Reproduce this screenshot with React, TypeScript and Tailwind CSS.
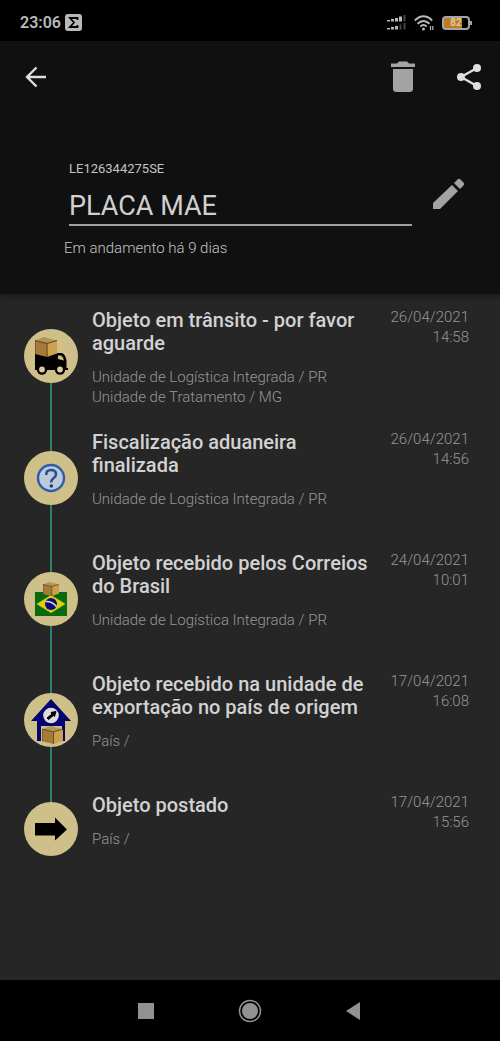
import React from "react";

interface TrackingEvent {
    title: string;
    details: string[];
    date: string;
    time: string;
    icon: React.ReactNode;
}

const Box: React.FC<{ x: number; y: number; w: number; h: number }> = ({ x, y, w, h }) => (
    <svg x={x} y={y} width={w} height={h} viewBox="0 0 20 20" preserveAspectRatio="none">
        <path d="M0 3.500 11 6.500V20L0 17Z" fill="#a67a38" />
        <path d="M11 6.500 20 3.500V16.500L11 20Z" fill="#cda04e" />
        <path d="M0 3.500 8 0 20 3.500 11 6.500Z" fill="#b39457" />
        <path d="M0 3.500 11 6.500 20 3.500M11 6.500V20M0 3.500V17" fill="none" stroke="#4a3413" strokeWidth="0.8" />
    </svg>
);

const TruckIcon = () => (
    <svg viewBox="0 0 54 54" className="size-full" aria-hidden="true">
        <path d="M11 25H31L33 24H37Q40 24 41.500 28L42.500 31V39H44V41H11Z" fill="#000" />
        <path d="M34 26.500H37Q39 27.500 40 31.500L34 30Z" fill="#cfc08a" />
        <circle cx="18" cy="40.500" r="5.200" fill="#000" />
        <circle cx="36" cy="40.500" r="5.200" fill="#000" />
        <circle cx="18" cy="40.500" r="2.900" fill="#d8cca0" />
        <circle cx="36" cy="40.500" r="2.900" fill="#d8cca0" />
        <Box x={11} y={8} w={22} h={20} />
    </svg>
);

const QuestionIcon = () => (
    <svg viewBox="0 0 54 54" className="size-full" aria-hidden="true">
        <circle cx="27" cy="27" r="13" fill="#bccbdc" stroke="#2f5cab" strokeWidth="2.400" />
        <path
            d="M22.200 24Q22 19 27 19T32 23.200Q32 25.500 29.500 27.200T27.300 31.500"
            fill="none"
            stroke="#2f4f94"
            strokeWidth="2.600"
        />
        <circle cx="27.300" cy="35" r="1.800" fill="#26365e" />
    </svg>
);

const BrazilIcon = () => (
    <svg viewBox="0 0 54 54" className="size-full" aria-hidden="true">
        <path d="M11 20H43V44H11Z" fill="#0b6b0c" />
        <path d="M12.500 32 27 23 41.500 32 27 41Z" fill="#d8cf16" />
        <circle cx="27" cy="32" r="6" fill="#0a0a78" />
        <path d="M21.500 29.500Q28 29 32.500 34.500" fill="none" stroke="#dadada" strokeWidth="1.500" />
        <Box x={19} y={10} w={16} h={14} />
    </svg>
);

const OriginIcon = () => (
    <svg viewBox="0 0 54 54" className="size-full" aria-hidden="true">
        <path d="M27 6 47 28H41V48H38V33H17V48H13V28H7Z" fill="#04046e" />
        <circle cx="27" cy="22.500" r="7.800" fill="#dcdcdc" />
        <path d="M23 25 28 21 27 19.500 32 18.500 30.500 23.500 29.300 22.500 24.500 26.500Z" fill="#000" stroke="#000" />
        <Box x={18} y={33} w={21} h={18} />
    </svg>
);

const ArrowIcon = () => (
    <svg viewBox="0 0 54 54" className="size-full" aria-hidden="true">
        <path d="M11 21H31V15.500L43 27.500 31 38.500V33.500H11Z" fill="#000" />
    </svg>
);

const events: TrackingEvent[] = [
    {
        title: "Objeto em trânsito - por favor aguarde",
        details: ["Unidade de Logística Integrada / PR", "Unidade de Tratamento / MG"],
        date: "26/04/2021",
        time: "14:58",
        icon: <TruckIcon />,
    },
    {
        title: "Fiscalização aduaneira finalizada",
        details: ["Unidade de Logística Integrada / PR"],
        date: "26/04/2021",
        time: "14:56",
        icon: <QuestionIcon />,
    },
    {
        title: "Objeto recebido pelos Correios do Brasil",
        details: ["Unidade de Logística Integrada / PR"],
        date: "24/04/2021",
        time: "10:01",
        icon: <BrazilIcon />,
    },
    {
        title: "Objeto recebido na unidade de exportação no país de origem",
        details: ["País /"],
        date: "17/04/2021",
        time: "16:08",
        icon: <OriginIcon />,
    },
    {
        title: "Objeto postado",
        details: ["País /"],
        date: "17/04/2021",
        time: "15:56",
        icon: <ArrowIcon />,
    },
];

const StatusBar = () => (
    <div className="flex h-[41px] items-center justify-between bg-black pt-1 pr-7 pl-5 text-[#b9b9b9]">
        <div className="flex items-center gap-1">
            <span className="text-base font-semibold">23:06</span>
            <svg width="17" height="17" viewBox="0 0 17 17" aria-hidden="true">
                <rect width="17" height="17" rx="3" fill="#b9b9b9" />
                <path d="M12.500 6V4H5L9 8.500 5 13H12.500V11" fill="none" stroke="#000" strokeWidth="1.800" />
            </svg>
        </div>
        <div className="flex items-center gap-2">
            <svg width="19" height="16" viewBox="0 0 19 16" fill="#b9b9b9" aria-hidden="true">
                <path d="M0 5H3V6.500H0ZM4 4H7V6.500H4ZM8 3H11V6.500H8ZM12 1.500H15V6.500H12ZM0 13H3V14.500H0ZM4 12H7V14.500H4ZM8 11H11V14.500H8Z" />
                <path d="M16.500 0H18.500V6.500H16.500ZM12.500 9.500H14.500V14.500H12.500ZM16.500 8H18.500V14.500H16.500Z" fill="#444" />
            </svg>
            <svg width="20" height="16" viewBox="0 0 20 16" fill="none" stroke="#b9b9b9" strokeWidth="1.900" aria-hidden="true">
                <path d="M.8 5.500Q9.500-2.800 18.200 5.500M3.500 8.800Q9.500 3 15.500 8.800M6.300 11.600Q9.500 8.500 12.700 11.600" />
                <circle cx="9.500" cy="14" r="1.500" fill="#b9b9b9" stroke="none" />
                <path d="M16.500 11V15M18.800 11V15" strokeWidth="1.200" />
            </svg>
            <div className="flex items-center">
                <div className="flex h-[14px] w-[28px] items-center justify-center rounded border-2 border-[#a7a4a8] bg-linear-to-r from-[#b97d20] from-75% to-black to-75% text-[10px] font-bold text-[#ddc9a3]">
                    82
                </div>
                <div className="h-1 w-0.5 bg-[#a7a4a8]" />
            </div>
        </div>
    </div>
);

const Header = () => (
    <header className="z-10 bg-[#101010] pb-9 shadow-[0_2px_5px_rgba(0,0,0,0.4)]">
        <div className="flex items-center justify-between pt-4 pr-4 pl-6">
            <button aria-label="Voltar">
                <svg width="24" height="40" viewBox="0 0 24 40" fill="none" stroke="#dedede" strokeWidth="2.400" aria-hidden="true">
                    <path d="M22 20H3.500M12.500 10.500 3 20 12.500 29.500" />
                </svg>
            </button>
            <div className="flex items-center gap-10">
                <button aria-label="Excluir">
                    <svg width="26" height="40" viewBox="0 0 26 40" fill="#a3a3a3" aria-hidden="true">
                        <path d="M1 6.500H7L9 4.500H17L19 6.500H25V10H1ZM3 12H23V31.500Q23 35 19.500 35H6.500Q3 35 3 31.500Z" />
                    </svg>
                </button>
                <button aria-label="Compartilhar">
                    <svg width="28" height="40" viewBox="0 0 28 40" aria-hidden="true">
                        <path d="M21 11 5 20 21 29" fill="none" stroke="#dedede" strokeWidth="2.400" />
                        <g fill="#dedede">
                            <circle cx="21" cy="11" r="4" />
                            <circle cx="5" cy="20" r="4" />
                            <circle cx="21" cy="29" r="4" />
                        </g>
                    </svg>
                </button>
            </div>
        </div>
        <div className="flex items-start pt-16 pr-[34px] pl-[69px]">
            <div className="min-w-0 flex-1">
                <label htmlFor="name" className="block text-[13px] leading-4 text-[#c4c4c4]">
                    LE126344275SE
                </label>
                <input
                    id="name"
                    defaultValue="PLACA MAE"
                    className="mt-2 block h-[41px] w-full border-b-2 border-[#a0a0a0] bg-transparent pt-0.5 text-[27px] text-[#d0d0d0] outline-none"
                />
            </div>
            <button aria-label="Editar" className="mt-4 ml-5">
                <svg width="34" height="34" viewBox="0 0 34 34" fill="#a3a3a3" aria-hidden="true">
                    <path d="M1 26 20 8 26 14 8 32H1ZM22 6 25.500 2.500Q27 1 28.500 2.500L31.500 5.500Q33 7 31.500 8.500L28 12Z" />
                </svg>
            </button>
        </div>
        <p className="mt-3 pl-16 text-[15px] leading-5 font-light text-[#c4c4c4]">Em andamento há 9 dias</p>
    </header>
);

const EventRow: React.FC<{ event: TrackingEvent; first: boolean; last: boolean }> = ({ event, first, last }) => (
    <li className="flex pr-[31px] pl-6">
        <div className="flex w-[54px] shrink-0 flex-col items-center">
            <div className={first ? "flex-1" : "w-0.5 flex-1 bg-[#2b806c]"} />
            <div className="size-[54px] overflow-hidden rounded-full bg-[#cfc08a]">{event.icon}</div>
            <div className={last ? "flex-1" : "w-0.5 flex-1 bg-[#2b806c]"} />
        </div>
        <div className="min-w-0 flex-1 pt-[14px] pb-[10px] pl-[14px]">
            <h2 className="text-xl leading-[23px] font-medium text-[#d2d2d2]">{event.title}</h2>
            <div className="mt-3 min-h-[39px] text-[15px] leading-5 font-light text-[#969696]">
                {event.details.map((detail) => (
                    <p key={detail}>{detail}</p>
                ))}
            </div>
        </div>
        <div className="w-[98px] shrink-0 pt-3 text-right text-[15px] leading-5 font-light text-[#969696]">
            <p>{event.date}</p>
            <p>{event.time}</p>
        </div>
    </li>
);

const NavigationBar = () => (
    <nav className="flex h-[61px] items-center justify-center gap-[84px] bg-black">
        <button aria-label="Recentes">
            <svg width="16" height="16" aria-hidden="true">
                <rect width="16" height="16" fill="#929292" />
            </svg>
        </button>
        <button aria-label="Início">
            <svg width="24" height="24" viewBox="0 0 24 24" aria-hidden="true">
                <circle cx="12" cy="12" r="10.500" fill="none" stroke="#929292" strokeWidth="1.500" />
                <circle cx="12" cy="12" r="8" fill="#929292" />
            </svg>
        </button>
        <button aria-label="Retornar">
            <svg width="16" height="18" viewBox="0 0 16 18" aria-hidden="true">
                <path d="M14 0V18L0 9Z" fill="#929292" />
            </svg>
        </button>
    </nav>
);

export default function App() {
    return (
        <div className="flex min-h-screen flex-col bg-[#262626] font-['Roboto',sans-serif]">
            <StatusBar />
            <Header />
            <main className="flex-1 pt-px">
                <ul>
                    {events.map((event, index) => (
                        <EventRow
                            key={event.title}
                            event={event}
                            first={index === 0}
                            last={index === events.length - 1}
                        />
                    ))}
                </ul>
            </main>
            <NavigationBar />
        </div>
    );
}
